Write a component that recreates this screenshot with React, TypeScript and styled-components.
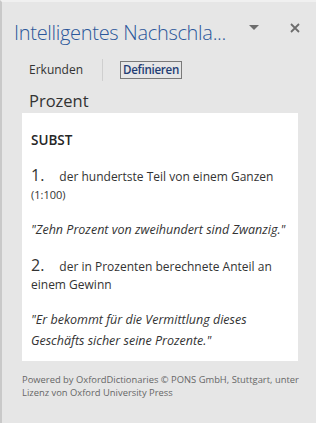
import styled, { createGlobalStyle } from 'styled-components';

const GlobalStyle = createGlobalStyle`
  html, body {
    margin: 0;
    padding: 0;
  }
  body {
    font-family: "Open Sans", "Noto Sans", sans-serif;
    background: #e6e6e6;
  }
`;

const Pane = styled.div`
  box-sizing: border-box;
  width: 316px;
  height: 423px;
  background: #e6e6e6;
  border-left: 2px solid #c9c9c9;
  border-top: 2px solid #f0f0f0;
  display: flex;
  flex-direction: column;
  overflow: hidden;
`;

const Header = styled.div`
  display: flex;
  align-items: center;
  padding: 15px 14px 0 12px;
  height: 30px;
`;

const Title = styled.h1`
  flex: 1;
  margin: 0;
  font-size: 20px;
  font-weight: 300;
  color: #2b579a;
  white-space: nowrap;
  letter-spacing: -0.3px;
`;

const IconButton = styled.button<{ $gap?: number }>`
  border: 0;
  background: none;
  padding: 0;
  display: flex;
  align-items: center;
  justify-content: center;
  color: #6d6d6d;
  width: 14px;
  height: 14px;
  margin-bottom: 9px;
  margin-left: ${(p) => p.$gap ?? 0}px;
`;

const Tabs = styled.div`
  display: flex;
  align-items: center;
  padding: 11px 0 0 24px;
  height: 24px;
`;

const Tab = styled.div<{ $active?: boolean }>`
  font-size: ${(p) => (p.$active ? '11.6px' : '12px')};
  line-height: 16px;
  padding: 0 2px;
  border: 1px solid ${(p) => (p.$active ? '#7a7a7a' : 'transparent')};
  color: ${(p) => (p.$active ? '#1f3d74' : '#333')};
  font-weight: ${(p) => (p.$active ? 600 : 400)};
  letter-spacing: ${(p) => (p.$active ? '-0.3px' : '0')};
`;

const Divider = styled.div`
  width: 1px;
  height: 22px;
  background: #cfcfcf;
  margin: 0 17px 0 16px;
`;

const Word = styled.h2`
  margin: 0;
  padding: 9px 0 0 27px;
  font-size: 16.5px;
  font-weight: 400;
  color: #333;
  line-height: 20px;
`;

const Card = styled.div`
  margin: 2px 18px 0 20px;
  background: #fff;
  padding: 14px 9px 10px 9px;
  color: #333;
`;

const PartOfSpeech = styled.div`
  font-size: 13.5px;
  font-weight: 600;
  margin: 4px 0 18px 0;
  color: #262626;
`;

const Sense = styled.div`
  font-size: 12px;
  line-height: 18px;
  color: #333;
  margin-bottom: 15px;
`;

const Num = styled.span`
  font-size: 16px;
  line-height: 16px;
  margin-right: 15px;
  color: #333;
`;

const Small = styled.span`
  font-size: 11px;
`;

const Example = styled.div`
  font-size: 12.5px;
  font-style: italic;
  line-height: 21px;
  color: #333;
  margin-bottom: 17px;

  &:last-child {
    margin-bottom: 0;
  }
`;

const Footer = styled.div`
  padding: 12px 6px 0 20px;
  font-size: 9.4px;
  line-height: 13px;
  color: #666;
`;

export default function App() {
  return (
    <>
      <GlobalStyle />
      <Pane>
        <Header>
          <Title>Intelligentes Nachschla...</Title>
          <IconButton aria-label="Menü">
            <svg width="10" height="6" viewBox="0 0 10 6">
              <path d="M0 0h10L5 5z" fill="currentColor" />
            </svg>
          </IconButton>
          <IconButton aria-label="Schließen" $gap={27}>
            <svg width="10" height="10" viewBox="0 0 10 10">
              <path d="M1 1l8 8M9 1l-8 8" stroke="currentColor" strokeWidth="1.8" />
            </svg>
          </IconButton>
        </Header>
        <Tabs>
          <Tab>Erkunden</Tab>
          <Divider />
          <Tab $active>Definieren</Tab>
        </Tabs>
        <Word>Prozent</Word>
        <Card>
          <PartOfSpeech>SUBST</PartOfSpeech>
          <Sense>
            <Num>1.</Num>der hundertste Teil von einem Ganzen <Small>(1:100)</Small>
          </Sense>
          <Example>"Zehn Prozent von zweihundert sind Zwanzig."</Example>
          <Sense>
            <Num>2.</Num>der in Prozenten berechnete Anteil an einem Gewinn
          </Sense>
          <Example>"Er bekommt für die Vermittlung dieses Geschäfts sicher seine Prozente."</Example>
        </Card>
        <Footer>
          Powered by OxfordDictionaries © PONS GmbH, Stuttgart, unter Lizenz von Oxford University Press
        </Footer>
      </Pane>
    </>
  );
}
